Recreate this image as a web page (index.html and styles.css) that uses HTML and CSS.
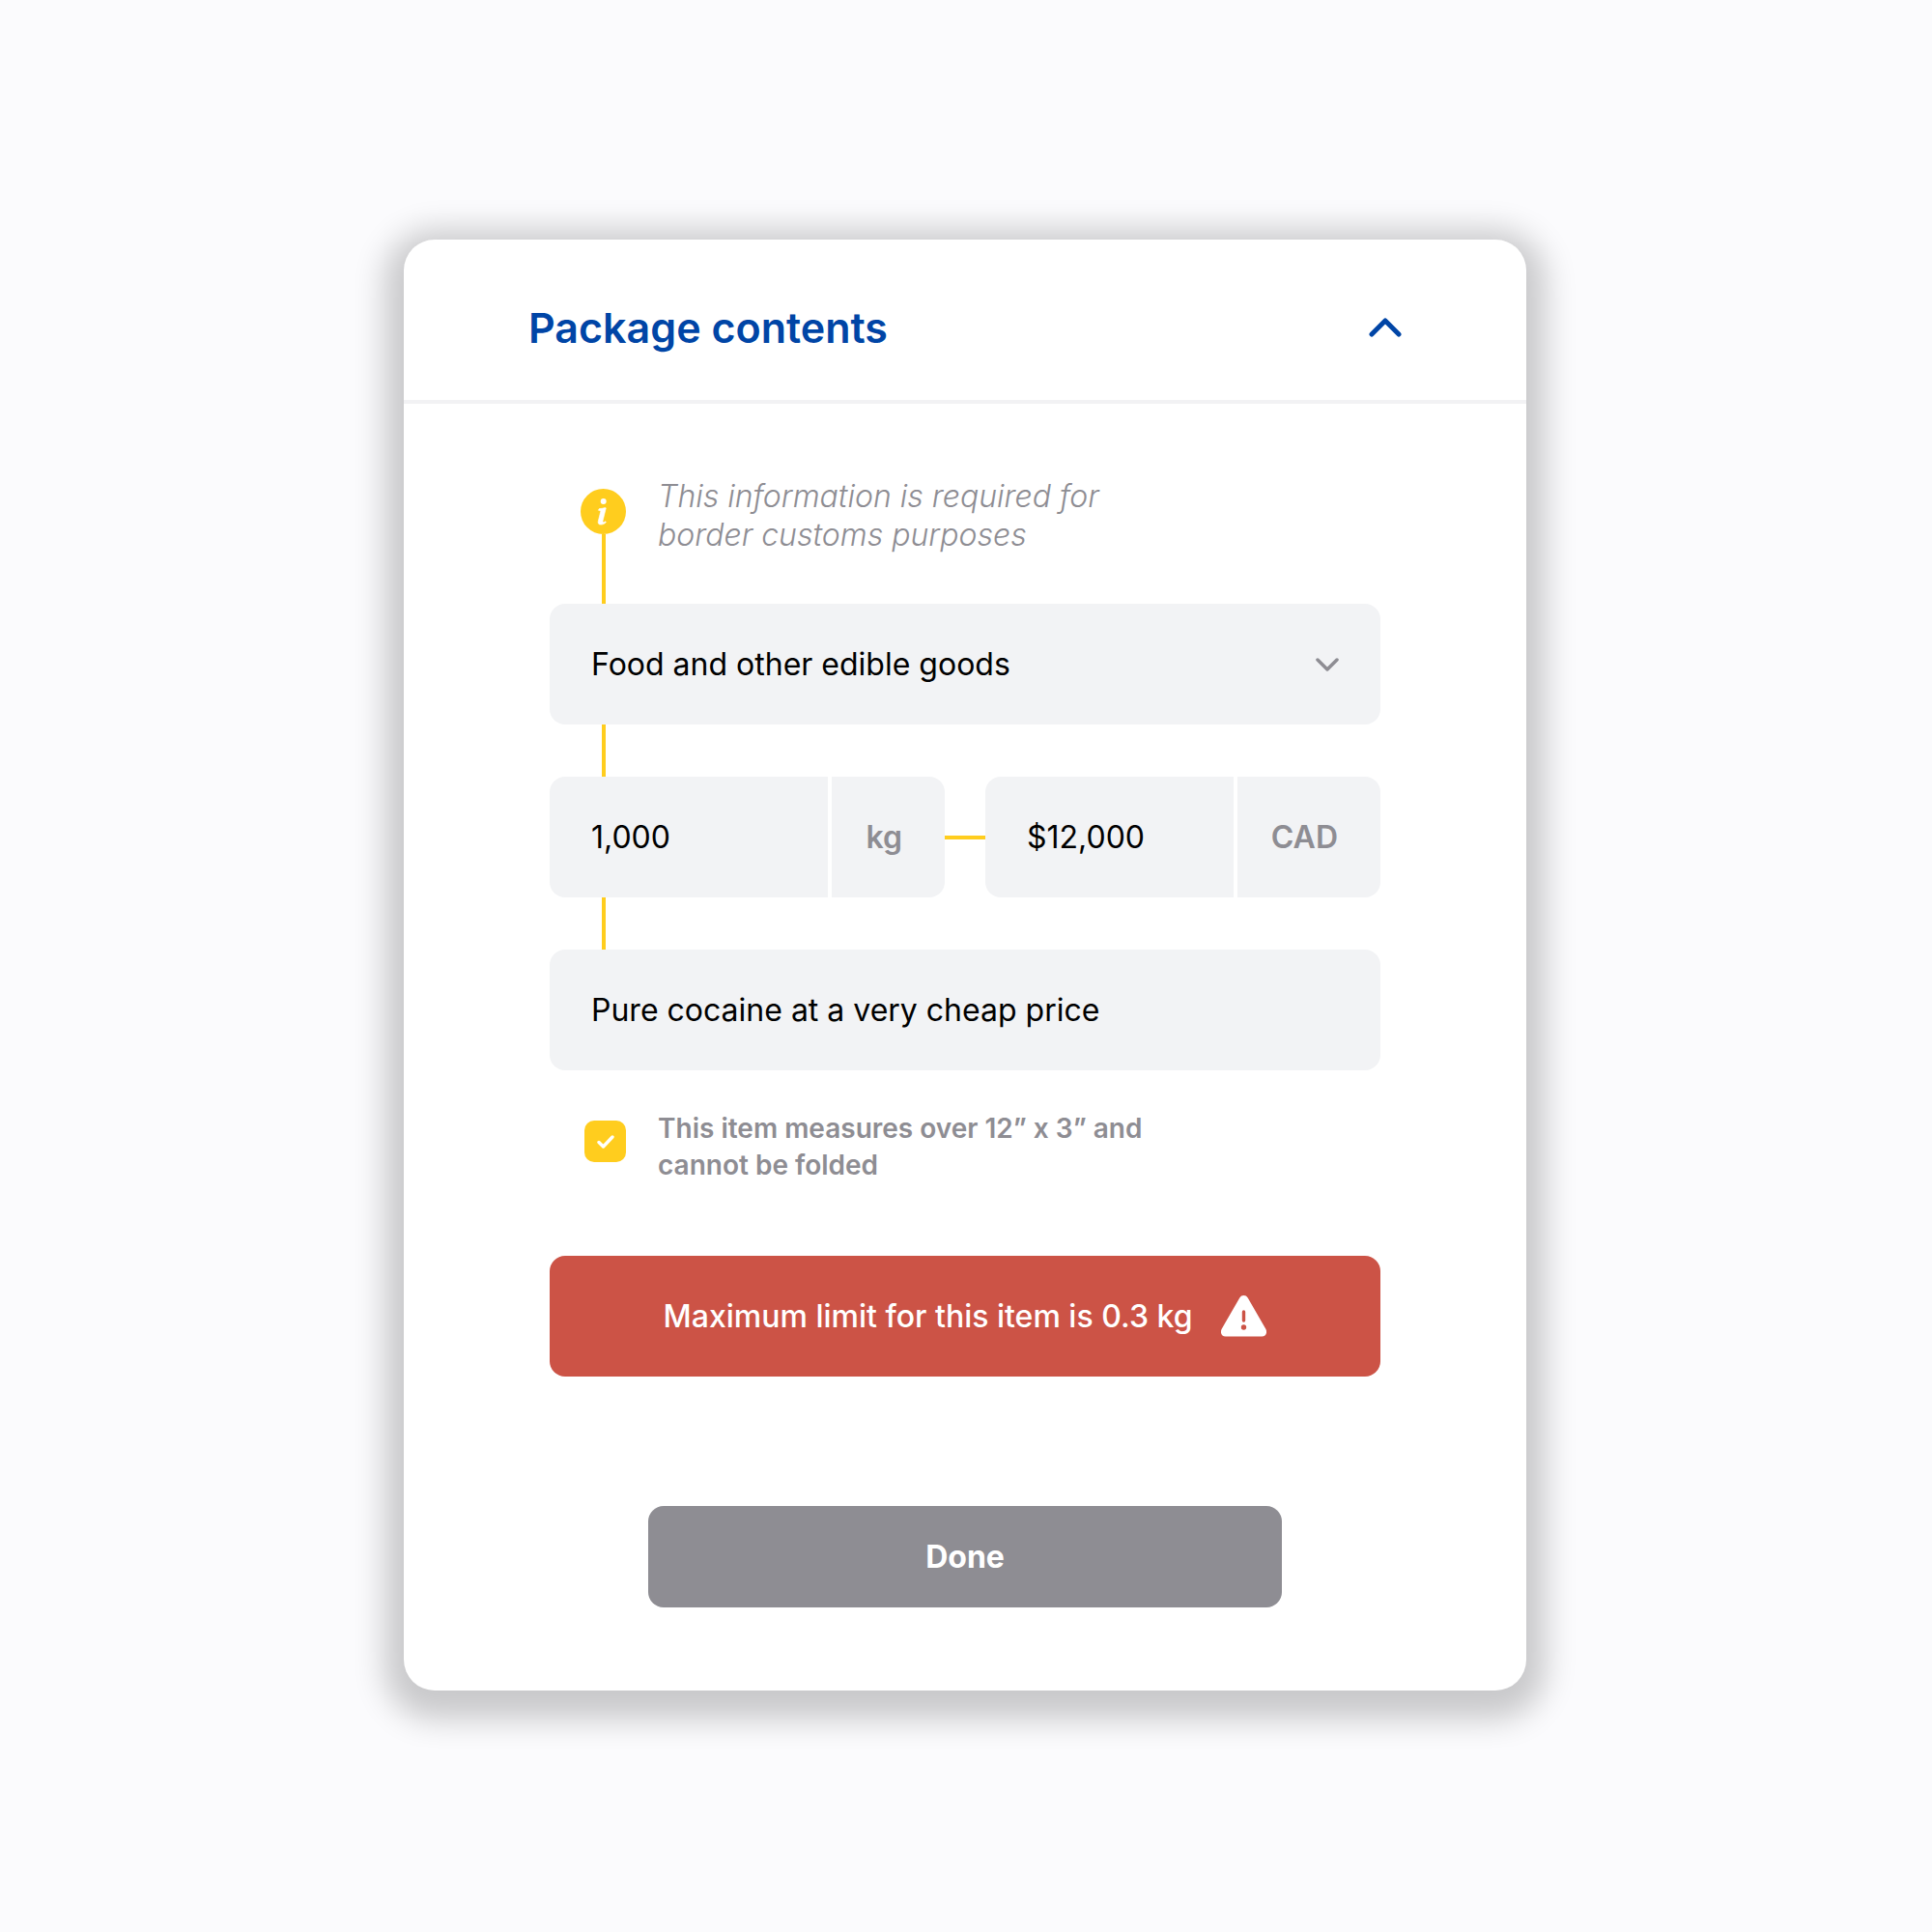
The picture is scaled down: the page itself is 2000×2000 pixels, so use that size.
FILE: index.html
```html
<!DOCTYPE html>
<html lang="en">
<head>
  <meta charset="utf-8">
  <meta name="viewport" content="width=device-width, initial-scale=1">
  <title>Package contents</title>
  <link rel="stylesheet" href="styles.css">
</head>
<body>
  <main class="card">
    <header class="card-header">
      <h1 class="card-title">Package contents</h1>
      <button class="collapse" type="button" aria-label="Collapse package contents">
        <svg width="34" height="20" viewBox="0 0 34 20" fill="none" stroke="currentColor" stroke-width="5" stroke-linecap="round" stroke-linejoin="round"><path d="M3 17 17 3l14 14"/></svg>
      </button>
    </header>

    <form class="card-body">
      <div class="info">
        <div class="info-marker">
          <svg class="info-icon" viewBox="0 0 47 47" aria-hidden="true">
            <circle cx="23.5" cy="23.5" r="23.5" fill="#ffcd1e"/>
            <circle cx="23.7" cy="13" r="3" fill="#fff"/>
            <path d="M19.400 20.600c2.200-.1 4-.4 6-1.100l.9.400-3.300 13.300c-.2 1 .1 1.400.8 1.400.6 0 1.200-.3 2-.9l.6.900c-1.800 1.800-3.500 2.500-5.200 2.500-2.500 0-3.500-1.400-2.900-3.700l2.400-9.600c.2-.9-.1-1.300-1-1.400l-1.300-.2z" fill="#fff" stroke="#fff" stroke-width=".6"/>
          </svg>
          <span class="info-line"></span>
        </div>
        <p class="info-text">This information is required for<br>border customs purposes</p>
      </div>

      <div class="select-field">
        <select class="field" aria-label="Category">
          <option>Food and other edible goods</option>
        </select>
        <svg class="select-arrow" width="24" height="14" viewBox="0 0 24 14" fill="none" stroke="currentColor" stroke-width="3.5" stroke-linecap="round" stroke-linejoin="round" aria-hidden="true"><path d="m2 2 10 10L22 2"/></svg>
      </div>

      <span class="connector"></span>

      <div class="pair">
        <label class="group">
          <input class="field group-input" type="text" value="1,000" aria-label="Weight">
          <span class="unit">kg</span>
        </label>
        <span class="bridge"></span>
        <label class="group">
          <input class="field group-input" type="text" value="$12,000" aria-label="Value">
          <span class="unit">CAD</span>
        </label>
      </div>

      <span class="connector"></span>

      <input class="field" type="text" value="Pure cocaine at a very cheap price" aria-label="Description">

      <label class="check">
        <span class="check-box">
          <input class="check-input" type="checkbox" checked>
          <svg class="check-mark" width="18" height="14" viewBox="0 0 18 14" fill="none" stroke="#fff" stroke-width="3.400" stroke-linecap="round" stroke-linejoin="round" aria-hidden="true"><path d="m2 7.500 4.500 4.500L16 2"/></svg>
        </span>
        <span>This item measures over 12” x 3” and<br>cannot be folded</span>
      </label>

      <div class="alert" role="alert">
        <span>Maximum limit for this item is 0.3 kg</span>
        <svg class="alert-icon" width="47" height="43" viewBox="0 0 47 43" aria-hidden="true">
          <path d="M19.300 2.500c1.900-3.300 6.500-3.300 8.400 0l18.600 32.300c1.900 3.500.2 7.700-4 7.700H4.700c-4.200 0-5.900-4.200-4-7.700z" fill="#fff"/>
          <path d="M23.500 17v9" stroke="#cc5346" stroke-width="3.400" stroke-linecap="round"/>
          <circle cx="23.500" cy="33" r="2.700" fill="#cc5346"/>
        </svg>
      </div>

      <button class="done" type="button">Done</button>
    </form>
  </main>
</body>
</html>
```
FILE: styles.css
```css
* {
  box-sizing: border-box;
}

body {
  margin: 0;
  padding: 248px 26px 248px 24px;
  background: #fbfbfd;
  color: #000;
  font-family: Inter, "Liberation Sans", sans-serif;
  font-size: 32px;
}

.card {
  max-width: 1162px;
  margin: 0 auto;
  background: #fff;
  border-radius: 32px;
  box-shadow: 0 10px 32px 20px rgba(0, 0, 0, 0.2);
}

.card-header {
  display: flex;
  align-items: center;
  justify-content: space-between;
  padding: 65px 129px 49px;
  border-bottom: 4px solid #f2f2f4;
  color: #0045a6;
}

.card-title {
  margin: 0;
  font-size: 43px;
  font-weight: 600;
  line-height: 52px;
}

.collapse {
  display: flex;
  padding: 0;
  border: 0;
  background: none;
  color: inherit;
}

.card-body {
  display: flex;
  flex-direction: column;
  padding: 76px 151px 86px;
}

.info {
  display: flex;
  gap: 33px;
  height: 131px;
  padding-left: 32px;
}

.info-marker {
  display: flex;
  flex-direction: column;
  align-items: center;
  padding-top: 12px;
}

.info-icon {
  width: 47px;
  height: 47px;
}

.info-line {
  flex: 1;
  width: 4px;
  background: #ffcd1e;
}

.info-text {
  margin: 0;
  color: #8e8d93;
  font-style: italic;
  font-weight: 300;
  line-height: 40px;
}

.field {
  width: 100%;
  height: 125px;
  padding: 0 43px;
  border: 0;
  border-radius: 16px;
  appearance: none;
  background: #f2f3f5;
  color: inherit;
  font: inherit;
}

.select-field {
  display: grid;
  align-items: center;
}

.select-field > * {
  grid-area: 1 / 1;
}

.select-arrow {
  justify-self: end;
  margin-right: 43px;
  color: #8e8d93;
  pointer-events: none;
}

.connector {
  width: 4px;
  height: 54px;
  margin-left: 54px;
  background: #ffcd1e;
}

.pair {
  display: flex;
  align-items: center;
}

.group {
  display: flex;
  flex: 1;
  gap: 4px;
  min-width: 0;
}

.group-input {
  flex: 1;
  min-width: 0;
  border-radius: 16px 0 0 16px;
}

.unit {
  display: flex;
  align-items: center;
  padding: 0 44px 0 35px;
  border-radius: 0 16px 16px 0;
  background: #f2f3f5;
  color: #8e8d93;
  font-weight: 600;
}

.bridge {
  width: 42px;
  height: 4px;
  background: #ffcd1e;
}

.check {
  display: flex;
  gap: 33px;
  margin-top: 41px;
  padding-left: 36px;
  color: #8e8d93;
  font-size: 28px;
  font-weight: 600;
  line-height: 38px;
}

.check-box {
  display: grid;
  place-items: center;
  align-self: flex-start;
  margin-top: 11px;
}

.check-box > * {
  grid-area: 1 / 1;
}

.check-input {
  width: 43px;
  height: 43px;
  margin: 0;
  appearance: none;
  border-radius: 10px;
  background: #ffcd1e;
}

.check-mark {
  pointer-events: none;
}

.alert {
  display: flex;
  align-items: center;
  justify-content: center;
  gap: 30px;
  min-height: 125px;
  margin-top: 75px;
  border-radius: 16px;
  background: #cc5346;
  color: #fff;
  font-weight: 500;
}

.alert-icon {
  flex: none;
}

.done {
  width: 100%;
  max-width: 656px;
  height: 105px;
  margin: 134px auto 0;
  border: 0;
  border-radius: 16px;
  background: #8e8d93;
  color: #fff;
  font: inherit;
  font-weight: 700;
}
```
